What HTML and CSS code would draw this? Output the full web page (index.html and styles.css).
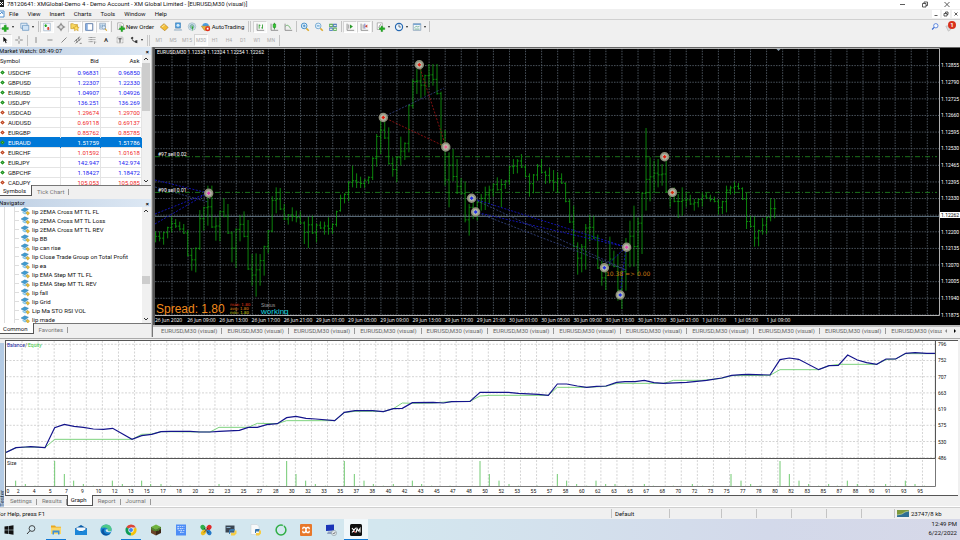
FILE: index.html
```html
<!DOCTYPE html>
<html lang="en">
<head>
<meta charset="utf-8">
<title>78120641: XMGlobal-Demo 4</title>
<link rel="stylesheet" href="styles.css">
</head>
<body>
<header class="titlebar">
  <svg class="applogo" viewBox="0 0 6 9"><path fill="#222" d="M0 0h4v7H0z"/><path stroke="#fff" d="M0 2l3 3M3 2L0 5"/></svg>
  <h1>78120641: XMGlobal-Demo 4 - Demo Account - XM Global Limited - [EURUSD,M30 (visual)]</h1>
  <div class="winbtns">
    <button aria-label="Minimize"><svg viewBox="0 0 8 8"><path d="M1 3.500h5"/></svg></button>
    <button aria-label="Restore"><svg viewBox="0 0 8 8"><path d="M1.500 2.500h3.500v3.500H1.500zM3 2.500V1h3.500v3.500H5"/></svg></button>
    <button aria-label="Close"><svg viewBox="0 0 8 8"><path d="M1.500 1l5 5M6.500 1l-5 5"/></svg></button>
  </div>
</header>
<nav class="menubar">
  <svg class="docicon" viewBox="0 0 6 10"><path fill="#fff" stroke="#4f8fd0" d="M-2 2h6v6h-6z"/><path stroke="#4f8fd0" d="M0 5l2-2 1 2"/></svg>
  <button>File</button><button>View</button><button>Insert</button><button>Charts</button><button>Tools</button><button>Window</button><button>Help</button>
  <div class="mdibtns">
    <button aria-label="Minimize chart"><svg viewBox="0 0 8 8"><path d="M2.500 5.500h3"/></svg></button>
    <button aria-label="Restore chart"><svg viewBox="0 0 8 8"><path d="M2 3.500h3V6H2zM3.500 3V2H6v2.500H5"/></svg></button>
    <button aria-label="Close chart"><svg viewBox="0 0 8 8"><path d="M2.500 2.500l3 3M5.500 2.500l-3 3"/></svg></button>
  </div>
</nav>
<div class="toolbar">
  <button class="drop" aria-label="New chart"><svg viewBox="0 0 12 12"><path fill="#fff" stroke="#7c98b5" stroke-width=".6" d="M0 2h7v6H0z"/><path fill="#22b022" stroke="#0a7a0a" stroke-width=".4" d="M5 4h2.500v2.500H10V9H7.500v2.500H5V9H2.500V6.500H5z"/></svg></button>
  <button class="drop wide" aria-label="Profiles"><svg viewBox="0 0 12 12"><path fill="#e8f2fb" stroke="#5c8dbb" stroke-width=".8" d="M1 1.500h7.500v6H1z"/><path fill="#cfe3f5" stroke="#5c8dbb" stroke-width=".8" d="M3 4h7.500v6H3z"/></svg></button>
  <i class="sep"></i>
  <button class="on" aria-label="Market Watch"><svg viewBox="0 0 12 12"><path fill="#f4f8fc" stroke="#8aa4bf" stroke-width=".7" d="M2 1.500h8v9H2z"/><path fill="#2a2" d="M4.500 2.500l2 2h-1v1.500h-2V4.500h-1z"/><path fill="#d43" d="M7.500 10L9.500 8h-1V6h-2v2h-1z"/></svg></button>
  <button aria-label="Data Window"><svg viewBox="0 0 12 12"><circle cx="6" cy="6" r="2.800" fill="#ddd" stroke="#777"/><path stroke="#666" d="M6 1v3M6 8v3M1 6h3M8 6h3"/></svg></button>
  <button class="on" aria-label="Navigator"><svg viewBox="0 0 12 12"><path fill="#f7d65e" stroke="#c09020" stroke-width=".7" d="M1 2h3l1 1h4v5H1z"/><path fill="#ffe066" stroke="#c08a10" stroke-width=".6" d="M7.500 4l1.200 2.200 2.300.3-1.700 1.600.5 2.400-2.300-1.200-2.200 1.200.4-2.400L4 6.500l2.300-.3z"/></svg></button>
  <button class="on" aria-label="Terminal"><svg viewBox="0 0 12 12"><path fill="#fff" stroke="#46689a" d="M2 2h8.500v8H2z"/><path fill="#86acdf" d="M2 2h2.500v8H2z"/></svg></button>
  <button class="on" aria-label="Strategy Tester"><svg viewBox="0 0 12 12"><path fill="#dce9f5" stroke="#7893b0" stroke-width=".7" d="M2 1.500h7v7H2z"/><path stroke="#477fb5" stroke-width=".7" d="M3.500 3v4M5.500 3v3M7.500 3v4"/><circle cx="7" cy="6.500" r="2" fill="#dff0ff" stroke="#6f8aa5" stroke-width=".7"/><path stroke="#d7a52a" stroke-width="1.300" d="M8.500 8l2 2.500"/></svg></button>
  <i class="sep"></i>
  <button class="order"><svg viewBox="0 0 12 12"><path fill="#fff" stroke="#888" stroke-width=".7" d="M2 1h5.500l1.500 2v6H2z"/><path stroke="#777" stroke-width=".6" d="M3.500 3.500h3M3.500 5h4"/><path fill="#22b022" stroke="#0a7a0a" stroke-width=".4" d="M6 5h2v2h2.500v2H8v2.500H6V9H4V7h2z"/></svg>New Order</button>
  <button aria-label="MetaEditor"><svg viewBox="0 0 12 12"><path fill="#f3bd35" stroke="#a87410" stroke-width=".7" d="M1.500 6l4.500-4 5 4.500L7 10.500z"/><path stroke="#fff2b5" d="M3.500 6L7 3.500"/></svg></button>
  <button aria-label="Market"><svg viewBox="0 0 12 12"><path fill="#4c9ee0" stroke="#2b71ad" stroke-width=".6" d="M3 1h6v6H3z"/><circle cx="6" cy="4" r="1.800" fill="#d5ecfb"/><path fill="#c8d5df" stroke="#7c99b3" stroke-width=".5" d="M1.500 10c0-3 9-3 9 0z"/></svg></button>
  <button aria-label="Signals"><svg viewBox="0 0 12 12"><circle cx="6" cy="5.500" r="4.500" fill="#dbe8ee" stroke="#8aa9bb" stroke-width=".7"/><circle cx="6" cy="5.500" r="2.500" fill="#9cc8b5" stroke="#5e93aa" stroke-width=".7"/><path fill="#3a3" d="M5.500 5.500h2L7 11z"/></svg></button>
  <button class="auto"><svg viewBox="0 0 12 12"><path fill="#4c9ee0" d="M1.500 5c0-5 8-5 8 0z"/><path fill="#e8b63a" stroke="#a87410" stroke-width=".6" d="M.5 5h10L7 10H4z"/><circle cx="8" cy="8" r="3" fill="#e0301e"/><path fill="#fff" d="M6.900 6.900h2.200v2.200H6.900z"/></svg>AutoTrading</button>
  <i class="sep double"></i>
  <button class="on" aria-label="Bar chart"><svg viewBox="0 0 12 12"><path stroke="#666" stroke-width=".8" d="M2.500 2v8H11"/><path stroke="#2a9a2a" d="M5 3v5M5 4h1.500M9 3v5M7.500 7H9"/></svg></button>
  <button aria-label="Candlesticks"><svg viewBox="0 0 12 12"><path stroke="#666" stroke-width=".8" d="M2.500 2v8H11"/><path stroke="#1c8a1c" d="M6.500 1v8"/><path fill="#3c3" stroke="#1c8a1c" stroke-width=".7" d="M5 2.500h3v4H5z"/></svg></button>
  <button aria-label="Line chart"><svg viewBox="0 0 12 12"><path stroke="#666" stroke-width=".8" d="M2.500 2v8H11"/><path stroke="#3a9a3a" stroke-width=".8" d="M3 5c3-3 5 1 6 3"/></svg></button>
  <i class="sep"></i>
  <button aria-label="Zoom in"><svg viewBox="0 0 12 12"><path stroke="#dca92c" stroke-width="2" d="M7.500 7.500l3 3"/><circle cx="5" cy="4.700" r="3.400" fill="#e5f3fc" stroke="#2f7fc0"/><path stroke="#2f7fc0" d="M3.300 4.700h3.400M5 3v3.400"/></svg></button>
  <button aria-label="Zoom out"><svg viewBox="0 0 12 12"><path stroke="#dca92c" stroke-width="2" d="M7.500 7.500l3 3"/><circle cx="5" cy="4.700" r="3.400" fill="#e5f3fc" stroke="#6ba1cd"/><path stroke="#2f7fc0" d="M3.300 4.700h3.400"/></svg></button>
  <button aria-label="Tile windows"><svg viewBox="0 0 12 12"><path fill="#3c9c3c" d="M1.500 2h4.300v4H1.500zM6.200 6.500h4.300v4H6.200z"/><path fill="#3565b5" d="M6.200 2h4.300v4H6.200zM1.500 6.500h4.300v4H1.500z"/><path fill="#dff0df" d="M2.200 3.300h3v1.800h-3zM7 3.300h3v1.800H7zM2.200 7.800h3v1.800h-3zM7 7.800h3v1.800H7z"/></svg></button>
  <i class="sep"></i>
  <button class="on" aria-label="Auto scroll"><svg viewBox="0 0 12 12"><path stroke="#666" stroke-width=".8" d="M2.500 2v8H11M4.500 3v5"/><path fill="#2a9a2a" d="M6 3l3.500 2.500L6 8z"/></svg></button>
  <button class="on" aria-label="Chart shift"><svg viewBox="0 0 12 12"><path stroke="#666" stroke-width=".8" d="M2.500 2v8H11M5 3v5"/><path stroke="#33a" stroke-width=".8" d="M7 2v6"/><path fill="#c43" d="M7 5l3-2v4z"/></svg></button>
  <i class="sep"></i>
  <button class="drop" aria-label="Indicators"><svg viewBox="0 0 12 12"><path fill="#fff" stroke="#888" stroke-width=".7" d="M1.500 1h6v8h-6z"/><path stroke="#666" stroke-width=".8" d="M3 7c1 0 1-4 3-4"/><path fill="#22b022" stroke="#0a7a0a" stroke-width=".4" d="M6 5h2v2h2.500v2H8v2.500H6V9H4V7h2z"/></svg></button>
  <button class="drop" aria-label="Periods"><svg viewBox="0 0 12 12"><circle cx="6" cy="6" r="4.300" fill="#eef6fc" stroke="#2567b0" stroke-width="1.400"/><path stroke="#345" stroke-width=".8" d="M6 3v3h2.500"/></svg></button>
  <button class="drop" aria-label="Templates"><svg viewBox="0 0 12 12"><path fill="#eef5fb" stroke="#7693ae" stroke-width=".8" d="M1.500 2h9v8h-9z"/><path fill="#6fa0d0" d="M1.500 2h9v1.500h-9z"/><path stroke="#58a070" stroke-width=".8" d="M3 7l2-2 2 1 2-1M3 8.500h6"/></svg></button>
  <i class="sep"></i>
  <span class="grow"></span>
  <button aria-label="Search"><svg viewBox="0 0 12 12"><circle cx="7" cy="4.500" r="2.600" fill="#f6faff" stroke="#3568d4" stroke-width=".9"/><path stroke="#3568d4" stroke-width="1.400" d="M5 6.500L2.500 9"/></svg></button>
  <button class="alerts" aria-label="Notifications"><svg viewBox="0 0 12 12"><path fill="#ddd" stroke="#aaa" stroke-width=".6" d="M1 5l6-1v5L4 11z"/></svg><b>1</b></button>
</div>
<div class="toolbar second">
  <button class="on" aria-label="Cursor"><svg viewBox="0 0 12 12"><path fill="#111" d="M4 2l5 4.500H6.800L8 9.500l-1.200.5-1.200-3L4 8.500z"/></svg></button>
  <button aria-label="Crosshair"><svg viewBox="0 0 12 12"><path stroke="#555" stroke-width=".8" d="M6 1.500v3.500M6 7v3.500M1.500 6H5M7 6h3.500"/></svg></button>
  <i class="sep"></i>
  <button aria-label="Vertical line"><svg viewBox="0 0 12 12"><path stroke="#555" stroke-width=".8" d="M6 2.500v7"/></svg></button>
  <button aria-label="Horizontal line"><svg viewBox="0 0 12 12"><path stroke="#555" stroke-width=".8" d="M3 6h6"/></svg></button>
  <button aria-label="Trendline"><svg viewBox="0 0 12 12"><path stroke="#555" stroke-width=".8" d="M3 9l6-6"/></svg></button>
  <button aria-label="Channel"><svg viewBox="0 0 12 12"><path stroke="#555" stroke-width=".8" d="M1.500 8l7-6M3 10l7-6M4 5l1 4M6.500 3l1 4M8 10h2.500"/></svg></button>
  <button aria-label="Fibonacci"><svg viewBox="0 0 12 12"><path stroke="#555" stroke-width=".8" stroke-dasharray="1 .5" d="M2 3h8M2 5.500h8M2 8h6M9 8v3M9 8.500h2"/></svg></button>
  <button class="glyph" aria-label="Text">A</button>
  <button aria-label="Text label"><svg viewBox="0 0 12 12"><path stroke="#777" stroke-width=".7" stroke-dasharray="1 .6" d="M2.500 2.500h7v7h-7z"/><path stroke="#333" d="M4 4.500h4M6 4.500V9"/></svg></button>
  <button class="drop" aria-label="Arrows"><svg viewBox="0 0 12 12"><path fill="#333" d="M2 3.500l2-1.500 1.500 1.500-2 2zM7 7l3-1v4l-3-1zM4 5l3 3-.5.7L3.500 6z"/></svg></button>
  <i class="sep double"></i>
  <button class="tf">M1</button><button class="tf">M5</button><button class="tf">M15</button><button class="tf on">M30</button><button class="tf">H1</button><button class="tf">H4</button><button class="tf">D1</button><button class="tf">W1</button><button class="tf">MN</button>
  <i class="sep"></i>
</div>
<main class="workspace">
  <aside class="dock">
    <section class="panel">
      <h2>Market Watch: 08:49:07<button aria-label="Close Market Watch">×</button></h2>
      <div class="scroller market">
        <div class="clip">
          <table class="quotes">
            <thead><tr><th>Symbol</th><th>Bid</th><th>Ask</th></tr></thead>
            <tbody>
              <tr class="up"><td>USDCHF</td><td>0.96831</td><td>0.96850</td></tr>
              <tr class="up"><td>GBPUSD</td><td>1.22307</td><td>1.22330</td></tr>
              <tr class="up"><td>EURUSD</td><td>1.04907</td><td>1.04926</td></tr>
              <tr class="up"><td>USDJPY</td><td>136.251</td><td>136.269</td></tr>
              <tr class="down"><td>USDCAD</td><td>1.29674</td><td>1.29700</td></tr>
              <tr class="down"><td>AUDUSD</td><td>0.69118</td><td>0.69137</td></tr>
              <tr class="down"><td>EURGBP</td><td>0.85762</td><td>0.85785</td></tr>
              <tr class="up selected"><td>EURAUD</td><td>1.51759</td><td>1.51786</td></tr>
              <tr class="down"><td>EURCHF</td><td>1.01592</td><td>1.01618</td></tr>
              <tr class="up"><td>EURJPY</td><td>142.947</td><td>142.974</td></tr>
              <tr class="up"><td>GBPCHF</td><td>1.18427</td><td>1.18472</td></tr>
              <tr class="down"><td>CADJPY</td><td>105.053</td><td>105.085</td></tr>
            </tbody>
          </table>
        </div>
        <div class="bar"><svg viewBox="0 0 8 8"><path d="M2 5l2-2 2 2"/></svg><span class="thumb long"></span><svg class="end" viewBox="0 0 8 8"><path d="M2 3l2 2 2-2"/></svg></div>
      </div>
      <div class="tabs"><button class="active">Symbols</button><button>Tick Chart</button></div>
    </section>
    <section class="panel">
      <h2>Navigator<button aria-label="Close Navigator">×</button></h2>
      <div class="scroller nav">
        <ul class="clip tree" id="experts"></ul>
        <div class="bar"><svg viewBox="0 0 8 8"><path d="M2 5l2-2 2 2"/></svg><span class="thumb short"></span><svg class="end" viewBox="0 0 8 8"><path d="M2 3l2 2 2-2"/></svg></div>
      </div>
      <div class="tabs"><button class="active">Common</button><button>Favorites</button></div>
    </section>
  </aside>
  <section class="charts">
    <div class="chart">
      <svg class="plot" id="price" viewBox="155 48 785 268"></svg>
      <ol class="prices" id="prices"></ol>
      <ol class="times" id="times"></ol>
    </div>
    <div class="charttabs"><div class="strip" id="charttabs"></div><button class="arrow" aria-label="Scroll left"><svg viewBox="0 0 8 8"><path fill="#888" d="M5 2v4L3 4z"/></svg></button><button class="arrow" aria-label="Scroll right"><svg viewBox="0 0 8 8"><path fill="#000" d="M3 2v4l2-2z"/></svg></button></div>
  </section>
</main>
<section class="tester">
  <div class="side"><span>Tester</span></div>
  <div class="results">
    <div class="graph">
      <svg class="plot" id="balance" viewBox="6 341 930 146"></svg>
      <ol class="levels" id="levels"></ol>
      <ol class="deals" id="deals"></ol>
    </div>
    <div class="tabs"><button>Settings</button><button>Results</button><button class="active">Graph</button><button>Report</button><button>Journal</button></div>
  </div>
</section>
<footer class="status">
  <span class="help">For Help, press F1</span><span class="c1">Default</span><span class="c2"></span><span class="c3"></span><span class="c3"></span><span class="c3"></span><span class="c3"></span><span class="c4"></span>
  <span class="net"><svg viewBox="0 0 12 7"><path fill="#7d9a3c" d="M0 0h12v7H0z"/><path fill="#2f6f95" d="M0 7V5l5-1 3-2 4-1v6z"/><path stroke="#d8e2a8" stroke-width=".6" d="M0 5l5-1 3-2 4-1"/></svg>23747/8 kb</span>
</footer>
<nav class="taskbar">
  <button class="start" aria-label="Start"><svg viewBox="0 0 12 12"><path fill="#111" d="M1.500 2.600l4-.6v3.700h-4zM6 1.900l4.500-.7v4.500H6zM1.500 6.200h4V10l-4-.6zM6 6.200h4.500v4.500L6 10z"/></svg></button>
  <button aria-label="Search"><svg viewBox="0 0 12 12"><circle cx="7" cy="4.500" r="2.900" stroke="#222" stroke-width=".8"/><path stroke="#222" stroke-width=".9" d="M5 6.700L2 10"/></svg></button>
  <button class="running" aria-label="File Explorer"><svg viewBox="0 0 12 12"><path fill="#e9a820" d="M1 1.500h4l1 1.200h5V10H1z"/><path fill="#fbd768" d="M1 3.500h10V10H1z"/><path fill="#3c8fd8" d="M2.500 10.500V6.500h7v4H8v-2H4v2z"/></svg></button>
  <button aria-label="Mail"><svg viewBox="0 0 12 12"><path fill="#0b5ca8" d="M0 4.500L6 1l6 3.500V10H0z"/><path fill="#f4f8fb" d="M1.500 3.500h9V7h-9z"/><path fill="#1c86d8" d="M0 4.800l6 3 6-3V11H0z"/></svg></button>
  <button aria-label="Edge"><svg viewBox="0 0 12 12"><circle cx="6" cy="6" r="5.600" fill="#1583cf"/><path fill="#4fc987" d="M1 4C3-1 11-.5 11.600 5c0 2-1.600 3-3.600 2.500C9 4 5 2.500 1 4z"/><path fill="#0b54a0" d="M4 5.500C3 9 6 11 10.500 9.300 8 12.500 3 12 1.500 8.500 1 6 3 4.500 5 4.500z"/><path fill="#d3e7ef" d="M5.800 5.500C5 7.500 7 9 10.800 8c.8-1 .8-1 0-.8-2 .4-3.500-.2-3-2z"/></svg></button>
  <button class="running" aria-label="Chrome"><svg viewBox="0 0 12 12"><path fill="#db4437" d="M6 6L1.200 3.200A5.600 5.600 0 0 1 11 3.500H6z"/><path fill="#f4c20d" d="M6 6l5-2.500A5.600 5.600 0 0 1 5.800 11.600z"/><path fill="#0f9d58" d="M6 6l-.2 5.600A5.600 5.600 0 0 1 1.200 3.200z"/><circle cx="6" cy="6" r="2.600" fill="#fff"/><circle cx="6" cy="6" r="2" fill="#4285f4"/></svg></button>
  <button aria-label="Minecraft"><svg viewBox="0 0 12 12"><path fill="#6fb53f" d="M6 .5l5 2.500-5 2.700L1 3z"/><path fill="#6b4428" d="M1 3l5 2.700v5.800L1 9z"/><path fill="#3d2717" d="M11 3L6 5.700v5.800L11 9z"/><path fill="#4d8a2b" d="M1 3l5 2.700v1.500L5 6.500v1L3.500 6v1L1 5zM11 3L6 5.700v1.500l2-.7v1l1.500-2L11 5z"/></svg></button>
  <button aria-label="App"><svg viewBox="0 0 12 12"><path fill="#4d8df6" d="M1 .5h10v11H1z"/><path stroke="#e3eeff" stroke-width=".7" stroke-dasharray="1.500 .7" d="M2.500 2.500h7M2.500 4.500h7M3.500 6.500h6M5 8.500h4.500M3 2v4M6 4v5"/></svg></button>
  <button aria-label="App"><svg viewBox="0 0 12 12"><ellipse cx="3" cy="3.500" rx="2.300" ry="2.800" fill="#2eae4a" transform="rotate(-40 3 3.500)"/><ellipse cx="9" cy="3.500" rx="2.300" ry="2.800" fill="#e02828" transform="rotate(40 9 3.500)"/><ellipse cx="3.500" cy="8.500" rx="2.200" ry="3" fill="#f0be1f" transform="rotate(40 3.500 8.500)"/><ellipse cx="9" cy="8.500" rx="2.200" ry="2.800" fill="#2378c8" transform="rotate(-40 9 8.500)"/><path stroke="#222" stroke-width=".7" d="M4 4l4.500 5M8 4L4 8.500"/></svg></button>
  <button aria-label="Python IDLE"><svg viewBox="0 0 12 12"><path fill="#3b4652" d="M.5 1.500h9v7h-9z"/><path fill="#9fc9e8" d="M1.500 3h4v.8h-4z"/><path fill="#3a77ab" d="M6 5h3.500v2.500H5V10H4V6z"/><path fill="#f7cd43" d="M11.500 6.500V9.500l-2 2H6V9h3.500V6.500z"/></svg></button>
  <button aria-label="Python file"><svg viewBox="0 0 12 12"><path fill="#f7f9fa" stroke="#c4cdd2" stroke-width=".5" d="M1 .5h6l2 2v8H1z"/><path fill="#3a77ab" d="M6 5h3.500v2.500H6V9H5V5.500z"/><path fill="#f7cd43" d="M11 6.500v3l-2 2H6V9h3V6.500z"/></svg></button>
  <button aria-label="App"><svg viewBox="0 0 12 12"><circle cx="6" cy="6" r="4.900" stroke="#2fae45" stroke-width="1.500"/><path stroke="#d3e7ef" d="M8.500.5L8 3"/></svg></button>
  <button aria-label="XAMPP"><svg viewBox="0 0 12 12"><rect width="12" height="12" rx="1" fill="#e8782a"/><path stroke="#fff" stroke-width="1.300" d="M2.800 3.500h2c1.500 0 1 5 2.500 5h2M9.200 3.500h-2c-1.500 0-1 5-2.500 5h-2M2.800 3.500v1.800M9.200 3.500v1.800M2.800 8.500V6.700M9.200 8.500V6.700"/></svg></button>
  <button aria-label="Remote Desktop"><svg viewBox="0 0 12 12"><path fill="#1b35b8" d="M1 1l8-.5v6L1 7z"/><path fill="#8fa0c0" d="M3 7.500h4v1.500h2V10H2z"/><circle cx="9" cy="9" r="2.600" fill="#dfe6ea" stroke="#8a989f" stroke-width=".6"/><path stroke="#555" stroke-width=".7" d="M7.800 9l1 1 1.500-2"/></svg></button>
  <button class="running current" aria-label="XM"><svg viewBox="0 0 12 12"><rect width="12" height="12" rx="1.500" fill="#101010"/><path stroke="#fff" stroke-width="1.100" d="M2 4l3.500 4.500M5.800 3.800L2 8.500M6.200 8.500l.8-4L8.300 7l1.700-2.500V8.500"/><path stroke="#e02020" stroke-width=".8" d="M4 7l1.500 2"/></svg></button>
  <p class="clock"><span>12:49 PM</span><span>6/22/2022</span></p>
</nav>
<script src="charts.js"></script>
</body>
</html>
```
FILE: styles.css
```css
* { box-sizing: border-box; }
body {
  margin: 0;
  min-height: 100vh;
  display: flex;
  flex-direction: column;
  background: #f0f0f0;
  color: #111;
  font: 6px/8px Roboto, "Open Sans", sans-serif;
  overflow-x: hidden;
}
button {
  border: 0;
  padding: 0;
  margin: 0;
  background: none;
  color: inherit;
  font: inherit;
}
svg { display: block; fill: none; }
h1, h2, ol, ul, p { margin: 0; padding: 0; font: inherit; list-style: none; }

.titlebar { display: flex; height: 9px; background: #fff; line-height: 7px; }
.applogo { width: 6px; height: 9px; margin-right: 1px; }
.winbtns { display: flex; gap: 14px; margin-left: auto; margin-right: 9px; }
.winbtns svg, .mdibtns svg { width: 8px; height: 8px; stroke: #333; }
.winbtns svg path, .mdibtns svg path { stroke-width: .8; }

.menubar { display: flex; gap: 9px; height: 11px; border-bottom: 1px solid #d0d0d0; line-height: 10px; }
.docicon { width: 6px; height: 10px; margin-right: -6px; }
.mdibtns { display: flex; gap: 2px; margin-left: auto; align-items: center; }
.mdibtns button { background: #fff; }

.toolbar { display: flex; align-items: center; height: 13px; margin-left: -2px; }
.toolbar button { display: flex; align-items: center; justify-content: center; width: 14px; height: 12px; }
.toolbar svg { width: 10px; height: 10px; flex: none; }
.toolbar .on { background: #f9f9f9; border: 1px solid #d4d4d4; border-right-color: #fff; border-bottom-color: #fff; }
.toolbar .drop { width: 18px; gap: 2px; }
.toolbar .drop::after { content: ""; border: 1px solid transparent; border-top: 2px solid #222; border-bottom: 0; }
.toolbar .wide { width: 21px; }
.toolbar .sep { width: 1px; height: 11px; margin: 0 1px; background: #c2c2c2; }
.toolbar .double { width: 3px; margin: 0 2px; background: none; border: 1px solid #c8c8c8; border-width: 0 1px; }
.toolbar .order { width: 44px; }
.toolbar .auto { width: 47px; gap: 1px; }
.toolbar .grow { flex: 1; }
.toolbar .alerts { position: relative; width: 18px; justify-content: flex-start; padding-left: 3px; }
.alerts b { position: absolute; left: 6px; top: 0; width: 8px; height: 8px; border-radius: 4px; background: #d8301c; color: #fff; font-size: 6px; }
.second { height: 14px; }
.toolbar .glyph { font-weight: 700; color: #444; }
.toolbar .tf { color: #aaa; font-size: 5px; }

.workspace { display: grid; grid-template-columns: 152px minmax(0, 1fr); }
.dock { display: flex; flex-direction: column; gap: 2px; border-right: 1px solid #c8c8c8; }
.panel h2 { display: flex; justify-content: space-between; height: 8px; padding-right: 2px; background: linear-gradient(90deg, #bfd0e4, #dde8f4); text-indent: -1px; }
.panel h2 button { font-weight: 700; line-height: 7px; }
.scroller { display: flex; background: #fff; border-bottom: 1px solid #777; }
.market { height: 131px; }
.nav { height: 117px; }
.clip { flex: 1; overflow: hidden; }
.bar { display: flex; flex-direction: column; width: 9px; background: #f0f0f0; }
.bar svg { width: 8px; height: 8px; stroke: #333; }
.bar .end { margin-top: auto; }
.thumb { background: #cdcdcd; margin-right: 1px; }
.long { height: 48px; }
.short { height: 8px; margin-top: 61px; }

.quotes { width: 100%; border-collapse: collapse; table-layout: fixed; }
.quotes th { height: 12px; padding: 0 2px 0 0; font-weight: 400; text-align: right; }
.quotes th:first-child { width: 60px; text-align: left; }
.quotes td { height: 10px; padding: 0 1px 0 0; text-align: right; border: 1px solid #e4e4e4; border-width: 1px 1px 0 0; line-height: 9px; }
.quotes td:first-child { text-align: left; color: #111; }
.quotes td:first-child::before { content: ""; display: inline-block; box-sizing: content-box; width: 1px; height: 1px; margin: 0 4px 1px 1px; border: 1px solid #1c8a1c; background: #6c6; transform: rotate(45deg); }
.quotes .down td:first-child::before { border-color: #b8421c; background: #e98; }
.up { color: #2020f0; }
.down { color: #f02828; }
.quotes .selected td { background: #0078d7; color: #fff; border-color: #0078d7; }

.tabs { display: flex; height: 11px; color: #777; line-height: 9px; }
.tabs button { padding: 0 5px; background: linear-gradient(#999, #999) right 3px / 1px 6px no-repeat; }
.tabs .active { margin-top: -1px; height: 11px; padding: 0 5px 0 3px; background: #fff; border: 1px solid #555; border-top: 0; color: #111; }
.dock .tabs .active { border-left: 0; }

.tree { padding-left: 5px; background: linear-gradient(#ddd, #ddd) 4px 0 / 1px 100% no-repeat; }
.tree li { display: flex; align-items: center; gap: 2px; height: 9px; margin-left: 9px; border-left: 1px solid #ddd; white-space: nowrap; }
.tree li::before { content: ""; width: 4px; height: 1px; background: #ddd; }
.tree svg { width: 9px; height: 9px; }

.charts { border-left: 1px solid #777; min-width: 0; }
.chart { display: grid; grid-template-columns: minmax(0, 1fr) 20px; grid-template-rows: auto 9px; background: #000; border-top: 1px solid #666; border-left: 2px solid #555; color: #fff; }
.plot { width: 100%; height: auto; }
.prices { grid-column: 2; grid-row: 1 / 3; display: grid; grid-template-rows: repeat(16, 1fr); align-items: center; padding: 9px 0 2px 1px; font-size: 5px; }
.prices .last { margin: 0 0 0 -1px; background: #fff; color: #000; line-height: 6px; padding-left: 1px; }
.times { display: grid; grid-template-columns: repeat(20, 1fr); padding-right: 18%; font: 5px/8px "Open Sans", sans-serif; white-space: nowrap; }
.charttabs { display: flex; align-items: flex-start; height: 12px; border-top: 2px solid #bbb; color: #666; line-height: 8px; }
.strip { display: flex; flex: 1; min-width: 0; overflow: hidden; padding-left: 3px; }
.strip button { flex: none; padding: 0 5px; background: linear-gradient(#999, #999) right 1px / 1px 6px no-repeat; }
.charttabs .arrow { width: 9px; }
.arrow svg { width: 8px; height: 8px; }

.tester { display: flex; margin-top: 1px; border-top: 1px solid #aaa; background: #f0f0f0; }
.side { display: flex; align-items: flex-end; width: 4px; background: #b4cbe4; margin-top: 4px; overflow: hidden; }
.side span { writing-mode: vertical-rl; transform: rotate(180deg); line-height: 4px; color: #234; }
.results { flex: 1; min-width: 0; padding: 1px 2px 0 1px; border-bottom: 1px solid #fff; }
.graph { display: grid; grid-template-columns: minmax(0, 1fr) 22px; grid-template-rows: auto 8px; background: #fff; border: 1px solid #555; border-width: 1px 0 1px 1px; font-size: 5px; }
.levels { display: flex; flex-direction: column; justify-content: space-between; padding: 0 0 26px 2px; line-height: 6px; }
.deals { grid-column: 1 / 3; display: grid; grid-template-columns: 4px repeat(57, 1fr) 30px; text-align: center; line-height: 8px; }
.results .tabs { height: 10px; line-height: 8px; }

.status { display: flex; height: 12px; border-top: 1px solid #cfcfcf; }
.status span { border-left: 1px solid #c4c4c4; margin: 1px 0; padding-left: 3px; line-height: 9px; }
.status .help { flex: 1; border: 0; padding: 0; text-indent: -3px; }
.status .c1 { width: 58px; }
.status .c2 { width: 52px; }
.status .c3 { width: 35px; }
.status .c4 { width: 33px; }
.status .net { display: flex; align-items: center; gap: 2px; width: 66px; padding-left: 2px; }
.net svg { width: 12px; height: 7px; }

.taskbar { display: flex; flex: 1; min-height: 20px; background: linear-gradient(90deg, #d3e7ef 40%, #d3d9ea 80%, #d6d8e8); }
.taskbar button { display: flex; align-items: center; justify-content: center; width: 24px; margin-right: 1px; border-bottom: 1px solid transparent; padding-top: 1px; }
.taskbar svg { width: 12px; height: 12px; }
.taskbar .start { width: 18px; }
.taskbar .running { background: linear-gradient(#0f78d4, #0f78d4) center bottom / 20px 1px no-repeat border-box; }
.taskbar .current { background: #f0f7fa; border-color: #0f78d4; }
.clock { display: flex; flex-direction: column; align-items: flex-end; margin-left: auto; padding-right: 3px; line-height: 9px; }
```
FILE: charts.js
```js
const svgNS = 'http://www.w3.org/2000/svg';
const byId = (id) => document.getElementById(id);
const add = (svg, name, attrs, text) => {
  const node = document.createElementNS(svgNS, name);
  for (const key in attrs) node.setAttribute(key, attrs[key]);
  if (text) node.textContent = text;
  svg.append(node);
};
const fill = (id, tag, items, html = (t) => t) => {
  byId(id).innerHTML = items.map((t) => `<${tag}>${html(t)}</${tag}>`).join('');
};

/* Lists and axis labels */
const expertIcon = '<svg viewBox="0 0 12 12"><path fill="#3f9bd0" stroke="#2a6f9c" stroke-width=".5" d="M0 4l5-3 5 2-5 3.500z"/><path fill="#7fc4e8" d="M2 6l3 1.500L9 5v2.500L5.500 10 2 8z"/><path fill="#e8bd3a" stroke="#a8801c" stroke-width=".5" d="M6.500 7.500L9 6l2.500 2L9 11z"/></svg>';
fill('experts', 'li', ['lip 2EMA Cross MT TL FL', 'lip 2EMA Cross MT TL Loss', 'lip 2EMA Cross MT TL REV', 'lip BB', 'lip can rise', 'lip Close Trade Group on Total Profit', 'lip ea', 'lip EMA Step MT TL FL', 'lip EMA Step MT TL REV', 'lip fall', 'lip Grid', 'Lip Ma STO RSI VOL', 'lip made'], (t) => expertIcon + t);
fill('prices', 'li', '1.12855 1.12790 1.12725 1.12660 1.12595 1.12530 1.12465 1.12395 1.12330 1.12262 1.12200 1.12135 1.12070 1.12005 1.11940 1.11875'.split(' '));
byId('prices').children[9].className = 'last';
fill('times', 'li', ['26 Jun 2020', '26 Jun 09:00', '26 Jun 13:00', '26 Jun 17:00', '26 Jun 21:00', '29 Jun 01:00', '29 Jun 05:00', '29 Jun 09:00', '29 Jun 13:00', '29 Jun 17:00', '29 Jun 21:00', '30 Jun 01:00', '30 Jun 05:00', '30 Jun 09:00', '30 Jun 13:00', '30 Jun 17:00', '30 Jun 21:00', '1 Jul 01:00', '1 Jul 05:00', '1 Jul 09:00']);
fill('charttabs', 'button', Array(12).fill('EURUSD,M30 (visual)'));
fill('levels', 'li', '796 752 707 663 619 575 530 486'.split(' '));
fill('deals', 'li', '0 2 4 5 7 9 10 12 13 15 17 18 20 22 23 25 27 28 30 32 33 35 37 38 40 42 43 45 47 48 50 52 53 55 57 58 60 62 63 65 67 68 70 72 73 75 77 78 80 82 83 85 87 88 90 91 93 95'.split(' '));

/* Price chart */
const price = byId('price');
let grid = '';
for (let i = 0; i < 48; i++) grid += `M${172 + i * 16.07} 48V316`;
for (let i = 0; i < 16; i++) grid += `M155 ${65.6 + i * 16.62}H939`;
add(price, 'path', { d: grid, stroke: '#5d6874', 'stroke-width': 0.8, 'stroke-dasharray': '1.500 1.200' });
add(price, 'path', { d: 'M155 216.500H939', stroke: '#6b8090', 'stroke-width': 0.8 });
add(price, 'path', { d: 'M155 156.700H937M155 192.400H937', stroke: '#1f7f1f', 'stroke-width': 0.9, 'stroke-dasharray': '5 2 1 2' });

/* High and low of each bar, in thirds of a pixel below the chart's top */
const bars = '562-595 562-592 563-602 548-583 518-565 525-552 533-560 540-570 558-637 612-680 610-685 498-618 488-560 425-545 425-552 520-590 500-592 462-520 480-570 562-655 553-672 513-592 502-580 528-678 630-725 628-758 630-725 605-695 558-628 457-565 430-508 432-498 480-528 510-542 490-532 500-535 502-540 532-600 518-612 515-570 538-595 532-555 533-572 520-572 538-570 500-548 452-503 448-478 412-472 365-430 388-432 398-432 405-432 397-420 340-408 270-368 225-330 232-285 250-362 340-398 338-415 278-365 295-348 182-325 105-193 75-150 60-162 92-155 60-130 60-125 60-152 143-305 258-425 325-490 315-412 345-450 402-452 412-535 480-575 455-525 470-530 450-500 428-498 425-480 418-458 400-440 405-490 408-435 365-422 345-390 345-388 330-372 362-400 388-458 390-448 360-410 345-388 380-420 370-418 378-442 385-445 388-420 415-475 465-537 485-610 595-692 600-685 540-677 512-592 515-585 572-675 650-725 665-738 578-665 620-670 630-770 680-795 582-740 530-670 485-668 520-695 445-630 252-500 340-472 350-447 345-430 360-425 335-445 440-490 430-475 450-522 430-515 447-490 452-483 465-500 462-490 445-488 447-465 452-473 458-475 465-512 470-510 425-505 425-452 413-450 417-437 430-468 447-555 515-550 517-608 557-607 522-572 517-570 462-532 465-523'.split(' ').map((b) => b.split('-').map((v) => 44 + v / 3));
const clamp = (v, [hi, lo]) => Math.min(lo - 1, Math.max(hi + 1, v));
let last = 234;
let path = '';
bars.forEach((bar, i) => {
  const x = 155.6 + i * 4.02;
  const next = bars[i + 1] || bar;
  const close = clamp((next[0] + next[1]) / 2, bar);
  const open = clamp(last, bar);
  path += `M${x} ${bar[0]}V${bar[1]}M${x - 1.5} ${open}H${x}M${x} ${close}H${x + 1.5}`;
  last = close;
});
add(price, 'path', { d: path, stroke: '#0fa50f', 'stroke-width': 0.8 });

const dashed = (d, stroke, width = 0.8) => add(price, 'path', { d, stroke, 'stroke-width': width, 'stroke-dasharray': '2 1.500' });
dashed('M383 117L444 88M471 198L626 270M475 212L626 270M155 187L208 202', '#37478a');
dashed('M383 117L446 147M419 65L446 147', '#a81414');
dashed('M155 180L208 193M155 214L208 193M155 224L208 193M471 198L626 247M475 212L626 247M604 268L626 247M620 295L626 247', '#1212b0', 1);

const marks = [[208.7, 193.3, '#d63cb0'], [383.3, 117.5, '#e02010'], [419.3, 64.8, '#e02010'], [445.8, 147, '#e86890'], [471.6, 198.3, '#2030e0'], [475.6, 212, '#2030e0'], [626.6, 247.2, '#e050b0'], [604.4, 267.8, '#2030e0'], [620.2, 295, '#2030e0'], [664.6, 156.7, '#e02010'], [672.4, 192.4, '#d03010']];
marks.forEach(([cx, cy, color]) => {
  add(price, 'circle', { cx, cy, r: 3.8, fill: '#d0d0c4', stroke: '#8f8f7c', 'stroke-width': 1.8 });
  add(price, 'circle', { cx, cy, r: 2.5, stroke: '#8a9a80', 'stroke-width': 0.6 });
  add(price, 'path', { d: `M${cx} ${cy - 2}l2 2-2 2-2-2z`, fill: color });
});

const label = (x, y, size, color, text, family = 'DejaVu Sans') => add(price, 'text', { x, y, fill: color, 'font-size': size, 'font-family': family }, text);
label(157, 54, 5, '#fff', 'EURUSD,M30 1.12324 1.12324 1.12254 1.12262', 'Roboto');
label(158, 156, 5, '#fff', '#97 sell 0.02', 'Roboto');
label(158, 192, 5, '#fff', '#90 sell 0.01', 'Roboto');
label(606, 276, 6, '#c87814', '10.38 => 0.00');
label(156, 313, 12, '#f08a1c', 'Spread: 1.80', 'Liberation Sans');
label(230, 306, 4, '#e03818', 'max: 1.80');
label(230, 310, 4, '#e08818', 'avg: 1.80');
label(230, 314, 4, '#d8d018', 'min: 1.80');
label(261, 307, 5, '#999', 'Status', 'Liberation Sans');
label(261, 314, 8, '#18d8e0', 'working', 'Liberation Sans');
add(price, 'path', { d: 'M776 48.500h5l-2.500 2.500z', fill: '#8fa0b0' });
add(price, 'path', { d: 'M155 48.500H939.500V315.500H155', stroke: '#c4c4c4', 'stroke-width': 0.9 });

/* Balance graph, on the same scale of thirds */
const balance = byId('balance');
grid = '';
for (let i = 0; i < 57; i++) grid += `M${22 + i * 16.08} 341V487`;
for (let i = 0; i < 8; i++) grid += `M6 ${344.3 + i * 16.2}H935`;
add(balance, 'path', { d: grid, stroke: '#c9c9c9', 'stroke-width': 0.8, 'stroke-dasharray': '2 1.500' });
const line = (pts) => 'M' + pts.split(' ').map((p) => p.split(',')).map(([x, y]) => `${x / 3} ${335 + y / 3}`).join('L');
add(balance, 'path', { stroke: '#6fce6f', 'stroke-width': 0.9, d: line('18,352 48,338 92,336 135,338 164,313 396,313 425,298 455,297 483,290 630,291 657,277 745,277 772,265 832,266 860,257 1004,257 1033,233 1065,229 1118,229 1150,230 1180,221 1207,204 1237,205 1300,204 1350,200 1410,199 1440,183 1470,181 1645,181 1672,157 1760,157 1818,154 1850,145 1990,145 2005,141 2020,136 2105,136 2165,130 2195,122 2310,121 2340,104 2456,104 2487,92 2515,88 2630,88 2658,74 2687,72 2717,56 2806,56') });
add(balance, 'path', { stroke: '#14148c', 'stroke-width': 1.2, d: line('18,352 48,338 76,336 92,335 135,338 164,278 193,268 222,274 250,277 280,282 310,283 338,280 396,313 425,302 455,298 483,290 512,289 570,289 600,291 630,291 657,289 718,286 745,277 772,277 800,269 832,266 860,248 888,244 918,250 947,252 1004,257 1033,232 1065,227 1118,227 1150,230 1180,221 1207,220 1237,203 1300,202 1330,204 1355,200 1410,199 1440,172 1525,172 1555,175 1615,178 1645,181 1672,147 1700,147 1732,153 1760,157 1790,154 1818,153 1850,142 1875,140 1905,140 1933,136 1962,143 1990,145 2060,142 2120,136 2165,129 2195,121 2225,119 2245,118 2310,120 2340,74 2368,69 2396,73 2456,104 2487,92 2515,91 2543,60 2572,75 2600,83 2630,88 2658,72 2687,72 2717,55 2745,53 2780,55 2806,55') });
const sizes = '47:437 76:447 105:452 164:378 193:417 221:437 250:447 280:452 337:437 367:447 396:452 425:437 452:447 483:447 512:452 570:452 657:447 685:452 800:452 860:378 888:417 917:437 946:447 976:452 1033:378 1063:417 1092:437 1120:447 1150:452 1180:447 1237:437 1265:447 1295:452 1350:452 1440:378 1468:417 1497:437 1527:447 1555:452 1612:452 1672:417 1700:437 1730:447 1760:452 1788:437 1817:447 1845:447 1877:452 1933:447 1960:452 2020:452 2077:447 2108:452 2137:452 2193:417 2223:437 2252:447 2280:452 2340:378 2368:417 2397:437 2426:447 2456:452 2486:447 2512:452 2542:437 2572:447 2600:452 2657:447 2686:452 2716:437 2745:447 2773:452';
add(balance, 'path', { stroke: '#62c462', 'stroke-width': 0.9, d: sizes.split(' ').map((s) => s.split(':')).map(([x, y]) => `M${x / 3} ${335 + y / 3}V487`).join('') });
add(balance, 'path', { d: 'M6 458.500H935.500V341', stroke: '#555', 'stroke-width': 1.2 });
add(balance, 'path', { d: 'M6 486.500H935.500V458', stroke: '#777', 'stroke-width': 1 });
const note = (x, y, color, text) => add(balance, 'text', { x, y, fill: color, 'font-size': 5, 'font-family': 'Roboto' }, text);
note(7, 347, '#2020a0', 'Balance');
note(25, 347, '#222', '/');
note(28, 347, '#3cc83c', 'Equity');
note(7, 465, '#222', 'Size');
```
